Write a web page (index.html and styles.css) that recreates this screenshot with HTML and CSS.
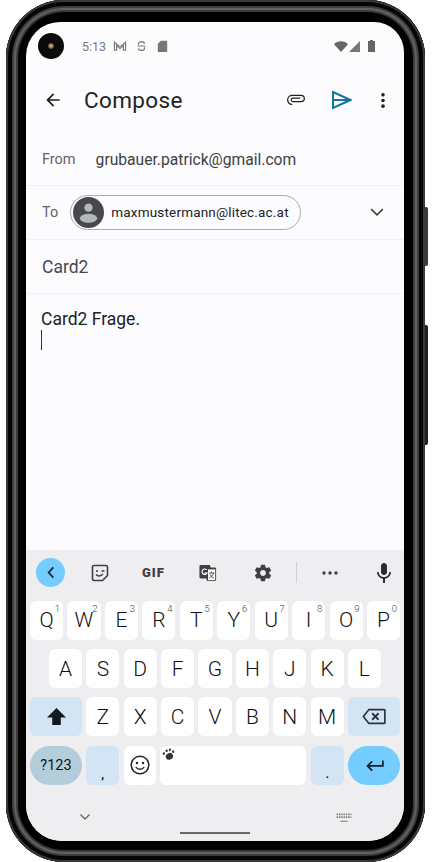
FILE: index.html
```html
<!DOCTYPE html>
<html lang="de">
<head>
<meta charset="utf-8">
<title>Compose</title>
<link rel="stylesheet" href="styles.css">
</head>
<body>
<div class="phone">
  <span class="side-btn side-power"></span>
  <span class="side-btn side-volume"></span>
  <div class="screen">
    <span class="camera"><span class="lens"></span></span>
    <div class="status">
      <div class="status-left">
        <span class="clock">5:13</span>
        <svg class="st-icon" viewBox="0 0 16 14"><path d="M1.500 12V2.500L8 8l6.500-5.500V12h-2.500V6.500L8 10 4 6.500V12z" fill="none" stroke="#777" stroke-width="1.300"/></svg>
        <svg class="st-icon st-s" viewBox="0 0 12 14"><path d="M2.500 4.500C2.500 1 9.500 1 9.500 4.500M1.500 7h9M2.500 9.500C2.500 13 9.500 13 9.500 9.500M2.500 4.500v1M9.500 8.500v1" fill="none" stroke="#777" stroke-width="1.300"/></svg>
        <svg class="st-icon st-sd" viewBox="0 0 12 14"><path d="M4 1h6.500a1 1 0 0 1 1 1v11a1 1 0 0 1-1 1h-9a1 1 0 0 1-1-1V4.500z" fill="#777"/></svg>
      </div>
      <div class="status-right">
        <svg class="st-wifi" viewBox="0 0 14 11"><path d="M0 3.200C3.800-.6 10.200-.6 14 3.200L7 11z" fill="#666"/></svg>
        <svg class="st-signal" viewBox="0 0 11 11"><path d="M11 0v11H0z" fill="#777"/></svg>
        <svg class="st-batt" viewBox="0 0 7 12"><path d="M2 0h3v1h2v11H0V1h2z" fill="#666"/></svg>
      </div>
    </div>

    <header class="toolbar">
      <svg class="ic-back" viewBox="0 0 24 24"><path d="M20 11H7.830l5.590-5.590L12 4l-8 8 8 8 1.410-1.410L7.830 13H20z" fill="#1f1f1f"/></svg>
      <h1 class="title">Compose</h1>
      <svg class="ic-attach" viewBox="0 0 24 24"><path d="M7.500 17.500C4.400 17.500 2 15.200 2 12s2.400-5.500 5.500-5.500H18c2.200 0 4 1.700 4 3.800s-1.800 3.700-4 3.700H8.500c-1.300 0-2.200-1-2.200-2.200s1-2.100 2.200-2.100H17" fill="none" stroke="#1f1f1f" stroke-width="1.500"/></svg>
      <svg class="ic-send" viewBox="0 0 20 20"><path d="M1 2l17.500 8L1 18zM1 10h15" fill="none" stroke="#17759c" stroke-width="2" stroke-linejoin="miter"/></svg>
      <svg class="ic-more" viewBox="0 0 4 18"><circle cx="2" cy="3" r="1.900" fill="#222"/><circle cx="2" cy="9" r="1.900" fill="#222"/><circle cx="2" cy="15" r="1.900" fill="#222"/></svg>
    </header>

    <div class="row row-from">
      <span class="label">From</span>
      <span class="from-value">grubauer.patrick@gmail.com</span>
    </div>
    <div class="row row-to">
      <span class="label">To</span>
      <span class="chip">
        <svg class="avatar" viewBox="0 0 32 32"><circle cx="16" cy="16" r="16" fill="#46484b"/><circle cx="16" cy="11" r="4.300" fill="#b4b6b9"/><ellipse cx="16" cy="22" rx="9" ry="4.600" fill="#b4b6b9"/></svg>
        <span class="chip-text">maxmustermann@litec.ac.at</span>
      </span>
      <svg class="ic-expand" viewBox="0 0 24 24"><path d="M5 8.500l7 7 7-7" fill="none" stroke="#444" stroke-width="2"/></svg>
    </div>
    <div class="row row-subject">Card2</div>
    <div class="body-text">
      <div>Card2 Frage.</div>
      <span class="caret"></span>
    </div>

    <section class="keyboard">
      <div class="kb-tools">
        <span class="kb-back"><svg viewBox="0 0 10 14"><path d="M7.500 1.500L2.500 7l5 5.500" fill="none" stroke="#1a2a33" stroke-width="2"/></svg></span>
        <svg class="tool tool-sticker" viewBox="0 0 18 18"><path d="M3 1.500h12a1.500 1.500 0 0 1 1.500 1.500v8.500l-5 5H3A1.500 1.500 0 0 1 1.500 15V3A1.500 1.500 0 0 1 3 1.500z" fill="none" stroke="#3c4043" stroke-width="1.600"/><circle cx="6" cy="7" r="1.100" fill="#3c4043"/><path d="M10.500 7h3M5 10.500c1.500 2 5 2 7-.5" fill="none" stroke="#3c4043" stroke-width="1.400"/></svg>
        <span class="tool-gif">GIF</span>
        <svg class="tool tool-trans" viewBox="0 0 20 20"><path d="M2 1h10l1 3h4.500A1.500 1.500 0 0 1 19 5.500v12a1.500 1.500 0 0 1-1.500 1.500H9l-1-3H2a1.500 1.500 0 0 1-1.500-1.500V2.500A1.500 1.500 0 0 1 2 1z" fill="#3c4043"/><path d="M10 6h8v12h-8z" fill="#fff"/><path d="M8.500 6.500A3 3 0 1 0 9 10H6" fill="none" stroke="#fff" stroke-width="1.300"/><path d="M11 10h6M14 8.500v1.500M16 10c-.5 2.500-2.500 4.500-4.500 5.500M12.500 11.500c.8 2 2.500 3.500 4 4" fill="none" stroke="#3c4043" stroke-width="1"/></svg>
        <svg class="tool tool-gear" viewBox="0 0 24 24"><path d="M19.430 12.980c.04-.32.070-.64.070-.98s-.03-.66-.07-.98l2.110-1.650c.19-.15.240-.42.120-.64l-2-3.460c-.12-.22-.39-.30-.61-.22l-2.490 1c-.52-.40-1.080-.73-1.690-.98l-.38-2.650C14.460 2.180 14.250 2 14 2h-4c-.25 0-.46.180-.49.420l-.38 2.650c-.61.250-1.170.59-1.690.98l-2.490-1c-.23-.09-.49 0-.61.220l-2 3.460c-.13.220-.07.490.12.640l2.110 1.650c-.04.320-.07.650-.07.980s.03.660.07.980l-2.110 1.650c-.19.150-.24.420-.12.640l2 3.460c.12.220.39.300.61.220l2.490-1c.52.400 1.080.730 1.690.980l.38 2.650c.3.240.24.420.49.420h4c.25 0 .46-.180.49-.420l.38-2.650c.61-.250 1.170-.590 1.690-.980l2.490 1c.23.090.49 0 .61-.220l2-3.460c.12-.220.070-.490-.12-.640zM12 15.500c-1.930 0-3.500-1.570-3.500-3.500s1.570-3.500 3.500-3.500 3.500 1.570 3.500 3.500-1.570 3.500-3.500 3.500z" fill="#3c4043"/></svg>
        <span class="tool-sep"></span>
        <svg class="tool-dots" viewBox="0 0 18 4"><circle cx="3" cy="2" r="1.700" fill="#3c4043"/><circle cx="9" cy="2" r="1.700" fill="#3c4043"/><circle cx="15" cy="2" r="1.700" fill="#3c4043"/></svg>
        <svg class="tool tool-mic" viewBox="0 0 24 24"><path d="M12 14c1.660 0 3-1.340 3-3V5c0-1.660-1.340-3-3-3S9 3.340 9 5v6c0 1.660 1.340 3 3 3zm5.300-3c0 3-2.540 5.100-5.300 5.100S6.700 14 6.700 11H5c0 3.410 2.720 6.230 6 6.720V22h2v-4.280c3.280-.480 6-3.300 6-6.720z" fill="#2b2e31"/></svg>
      </div>

      <div class="kb-row">
        <span class="key">Q<sup class="hint">1</sup></span>
        <span class="key">W<sup class="hint">2</sup></span>
        <span class="key">E<sup class="hint">3</sup></span>
        <span class="key">R<sup class="hint">4</sup></span>
        <span class="key">T<sup class="hint">5</sup></span>
        <span class="key">Y<sup class="hint">6</sup></span>
        <span class="key">U<sup class="hint">7</sup></span>
        <span class="key">I<sup class="hint">8</sup></span>
        <span class="key">O<sup class="hint">9</sup></span>
        <span class="key">P<sup class="hint">0</sup></span>
      </div>
      <div class="kb-row kb-row-home">
        <span class="key">A</span><span class="key">S</span><span class="key">D</span><span class="key">F</span><span class="key">G</span><span class="key">H</span><span class="key">J</span><span class="key">K</span><span class="key">L</span>
      </div>
      <div class="kb-row">
        <span class="key key-wide key-blue"><svg class="ic-shift" viewBox="0 0 22 20"><path d="M11 1l10 10h-5.500v8h-9v-8H1z" fill="#101820"/></svg></span>
        <span class="key">Z</span><span class="key">X</span><span class="key">C</span><span class="key">V</span><span class="key">B</span><span class="key">N</span><span class="key">M</span>
        <span class="key key-wide key-blue"><svg class="ic-del" viewBox="0 0 26 18"><path d="M7.500 1.500H24a.8.8 0 0 1 .8.8v13.400a.8.8 0 0 1-.8.8H7.500L1.500 9z" fill="none" stroke="#2a3238" stroke-width="1.800"/><path d="M11 5.500l7 7M18 5.500l-7 7" stroke="#2a3238" stroke-width="2"/></svg></span>
      </div>
      <div class="kb-row">
        <span class="key key-wide key-sym">?123</span>
        <span class="key key-blue key-punct">,</span>
        <span class="key"><svg class="ic-emoji" viewBox="0 0 20 20"><circle cx="10" cy="10" r="8.800" fill="none" stroke="#202124" stroke-width="1.500"/><circle cx="7" cy="8" r="1.200" fill="#202124"/><circle cx="13" cy="8" r="1.200" fill="#202124"/><path d="M5.800 12c1.800 3 6.600 3 8.400 0" fill="none" stroke="#202124" stroke-width="1.400"/></svg></span>
        <span class="key key-space"><svg class="ic-paw" viewBox="0 0 14 14"><ellipse cx="8" cy="9" rx="4" ry="3.500" fill="#333" transform="rotate(-25 8 9)"/><ellipse cx="2" cy="6" rx="1.200" ry="1.500" fill="#333"/><ellipse cx="5" cy="3" rx="1.200" ry="1.500" fill="#333"/><ellipse cx="8.500" cy="2" rx="1.200" ry="1.500" fill="#333"/><ellipse cx="12" cy="4" rx="1.200" ry="1.500" fill="#333"/></svg></span>
        <span class="key key-blue key-punct">.</span>
        <span class="key key-wide key-enter"><svg class="ic-enter" viewBox="0 0 20 14"><path d="M19 1.500v6H3M7.500 2.500L2.500 7.500l5 5" fill="none" stroke="#13222c" stroke-width="1.900"/></svg></span>
      </div>
    </section>

    <div class="navbar">
      <svg class="nav-down" viewBox="0 0 12 8"><path d="M1.500 1.500L6 6l4.500-4.500" fill="none" stroke="#666" stroke-width="1.300"/></svg>
      <span class="nav-home"></span>
      <svg class="nav-kbd" viewBox="0 0 16 12"><path d="M0 1.500h16M0 4.500h16" stroke="#777" stroke-width="1.800" stroke-dasharray="1.500 1"/><path d="M4 9h8" stroke="#777" stroke-width="1.200"/></svg>
    </div>
  </div>
</div>
</body>
</html>
```
FILE: styles.css
```css
* { box-sizing: border-box; }
html, body { margin: 0; padding: 0; background: #fff; }
body { width: 432px; height: 862px; overflow: hidden; font-family: Roboto, "Liberation Sans", sans-serif; }

.phone {
  position: relative;
  width: 419px;
  height: 862px;
  margin-left: 6px;
  padding: 22px 21px 21px 20px;
  background: #000;
  border-radius: 58px;
  box-shadow:
    inset 0 0 0 2px #3a3a3a,
    inset 0 0 0 6px #050505,
    inset 0 0 1px 8px #3c3c3c,
    inset 0 0 1px 10px #666,
    inset 0 0 1px 12px #3c3c3c,
    inset 0 0 0 14px #000;
}
.side-btn { position: absolute; right: -3px; width: 3px; background: #222; border-radius: 0 2px 2px 0; }
.side-power { top: 207px; height: 59px; background: #3a3a3a; }
.side-volume { top: 325px; height: 120px; }

.screen {
  position: relative;
  width: 378px;
  height: 819px;
  display: flex;
  flex-direction: column;
  background: #fcfcff;
  border-radius: 34px 30px 36px 36px;
  overflow: hidden;
}
.camera {
  position: absolute;
  left: 12px;
  top: 11px;
  width: 26px;
  height: 26px;
  border-radius: 50%;
  background: #0a0a0a;
  display: flex;
  align-items: center;
  justify-content: center;
}
.lens { width: 6px; height: 6px; border-radius: 50%; background: radial-gradient(circle, #c9a37a 20%, #3a2c22 80%); }

.status { height: 46px; flex: none; display: flex; justify-content: space-between; align-items: center; padding: 5px 29px 3px 56px; }
.status-left, .status-right { display: flex; align-items: center; }
.clock { font-size: 12.500px; color: #777; margin-right: 7px; }
.st-icon { width: 14px; height: 12px; margin-right: 9px; }
.st-s { width: 11px; margin-right: 10px; }
.st-sd { width: 11px; }
.st-wifi { width: 14px; height: 11px; margin-right: 1px; }
.st-signal { width: 11px; height: 11px; margin-right: 8px; }
.st-batt { width: 7px; height: 12px; }

.toolbar { height: 64px; flex: none; display: flex; align-items: center; padding: 0 16px 0 17px; }
.ic-back { width: 20px; height: 20px; flex: none; }
.title { flex: 1; margin: 0 0 0 21px; font-size: 22.500px; line-height: 26px; font-weight: 400; color: #1f1f1f; letter-spacing: .35px; }
.ic-attach { width: 20px; height: 20px; margin-right: 26px; }
.ic-send { width: 20px; height: 20px; margin-right: 29px; }
.ic-more { width: 4px; height: 17px; margin-right: 3px; }

.row { flex: none; display: flex; align-items: center; padding: 0 16px; border-bottom: 1px solid #f0f1f3; }
.row-from { height: 54px; padding-top: 2px; }
.row-to { height: 54px; padding-bottom: 1px; }
.row-subject { height: 54px; font-size: 17.500px; color: #45494d; padding-top: 1px; }
.label { font-size: 14.500px; color: #5f6368; }
.from-value { margin-left: 20px; font-size: 15.650px; color: #3c4043; }
.chip { display: flex; align-items: center; width: 231px; height: 35px; margin-left: 12px; padding-left: 2px; border: 1px solid #a8aaad; border-radius: 18px; background: #fcfcff; }
.avatar { width: 31px; height: 31px; flex: none; }
.chip-text { margin-left: 7px; font-size: 13.500px; font-weight: 400; color: #202124; letter-spacing: .18px; white-space: nowrap; }
.ic-expand { width: 20px; height: 20px; margin-left: auto; margin-right: 1px; }

.body-text { flex: 1; min-height: 0; padding: 15px 16px 0 15px; font-size: 17.500px; line-height: 20px; color: #202124; }
.caret { display: block; width: 1px; height: 20px; margin-top: 1px; background: #333; }

.keyboard { flex: none; display: flex; flex-direction: column; padding: 0 4px; background: #eeeef1; }
.kb-tools { height: 51px; flex: none; display: flex; align-items: center; padding-left: 6px; padding-bottom: 5px; }
.kb-back { width: 29px; height: 29px; border-radius: 50%; background: #74ccff; display: flex; align-items: center; justify-content: center; }
.kb-back svg { width: 10px; height: 13px; }
.tool { width: 18px; height: 18px; flex: none; }
.tool-sticker { margin-left: 26px; }
.tool-gif { margin-left: 33px; width: 24px; font-size: 13px; font-weight: 900; color: #3c4043; letter-spacing: 1px; }
.tool-trans { margin-left: 33px; }
.tool-gear { margin-left: 36px; width: 20px; height: 20px; }
.tool-sep { width: 1px; height: 21px; margin-left: 23px; background: #cfd0d3; }
.tool-dots { width: 18px; height: 4px; margin-left: 24px; }
.tool-mic { width: 24px; height: 24px; margin-left: 33px; }

.kb-row { flex: none; height: 39px; margin-bottom: 9.300px; display: flex; gap: 4.300px; }
.kb-row-home { padding: 0 19px; }
.key { position: relative; flex: 1 1 0; min-width: 0; display: flex; align-items: center; justify-content: center; background: #fff; border-radius: 6px; font-size: 21px; font-weight: 300; color: #111; }
.hint { position: absolute; top: 2px; right: 3px; font-size: 9.500px; line-height: 11px; color: #444; }
.key-wide { flex: none; width: 52px; }
.key-blue { background: #d3e5f4; }
.key-sym { background: #b4cddb; border-radius: 20px; font-size: 14.500px; font-weight: 400; }
.key-enter { background: #74ccff; border-radius: 20px; }
.key-punct { flex: none; width: 33px; font-size: 13px; font-weight: 500; padding-top: 16px; }
.key-space { flex: none; width: 146px; align-items: flex-start; justify-content: flex-start; }
.ic-shift { width: 21px; height: 19px; }
.ic-del { width: 24px; height: 17px; }
.ic-emoji { width: 20px; height: 20px; }
.ic-paw { width: 13px; height: 13px; margin: 2px 0 0 2px; }
.ic-enter { width: 19px; height: 13px; }

.navbar { flex: none; height: 47px; display: flex; align-items: flex-start; justify-content: space-between; padding: 19px 52px 0 53px; background: #eeeef1; position: relative; }
.nav-down { width: 12px; height: 8px; }
.nav-home { position: absolute; left: 154px; top: 38px; width: 70px; height: 2px; background: #666; }
.nav-kbd { width: 16px; height: 11px; }
```
